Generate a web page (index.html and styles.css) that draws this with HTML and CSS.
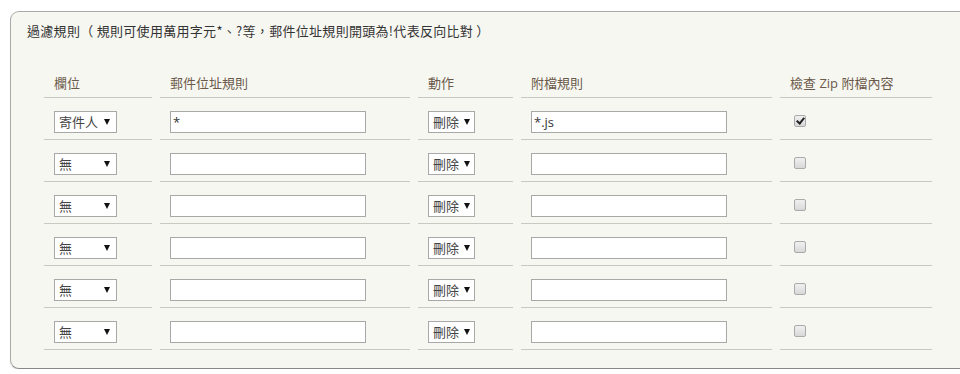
FILE: index.html
```html
<!DOCTYPE html>
<html lang="zh-Hant">
<head>
    <meta charset="UTF-8">
    <meta name="viewport" content="width=device-width, initial-scale=1.0">
    <title>過濾規則</title>
    <link rel="stylesheet" href="styles.css">
</head>
<body>
    <div class="panel">
        <p class="note">過濾規則（ 規則可使用萬用字元*、?等，郵件位址規則開頭為!代表反向比對 ）</p>
        <table class="rules">
            <thead>
                <tr>
                    <th class="c-field">欄位</th>
                    <th class="c-addr">郵件位址規則</th>
                    <th class="c-act">動作</th>
                    <th class="c-att">附檔規則</th>
                    <th class="c-zip">檢查 Zip 附檔內容</th>
                </tr>
            </thead>
            <tbody>
                <tr>
                    <td><span class="sel sel-field"><select><option>寄件人</option></select></span></td>
                    <td><input type="text" class="txt" value="*"></td>
                    <td><span class="sel sel-act"><select><option>刪除</option></select></span></td>
                    <td><input type="text" class="txt" value="*.js"></td>
                    <td><input type="checkbox" class="chk" checked></td>
                </tr>
                <tr>
                    <td><span class="sel sel-field"><select><option>無</option></select></span></td>
                    <td><input type="text" class="txt"></td>
                    <td><span class="sel sel-act"><select><option>刪除</option></select></span></td>
                    <td><input type="text" class="txt"></td>
                    <td><input type="checkbox" class="chk"></td>
                </tr>
                <tr>
                    <td><span class="sel sel-field"><select><option>無</option></select></span></td>
                    <td><input type="text" class="txt"></td>
                    <td><span class="sel sel-act"><select><option>刪除</option></select></span></td>
                    <td><input type="text" class="txt"></td>
                    <td><input type="checkbox" class="chk"></td>
                </tr>
                <tr>
                    <td><span class="sel sel-field"><select><option>無</option></select></span></td>
                    <td><input type="text" class="txt"></td>
                    <td><span class="sel sel-act"><select><option>刪除</option></select></span></td>
                    <td><input type="text" class="txt"></td>
                    <td><input type="checkbox" class="chk"></td>
                </tr>
                <tr>
                    <td><span class="sel sel-field"><select><option>無</option></select></span></td>
                    <td><input type="text" class="txt"></td>
                    <td><span class="sel sel-act"><select><option>刪除</option></select></span></td>
                    <td><input type="text" class="txt"></td>
                    <td><input type="checkbox" class="chk"></td>
                </tr>
                <tr>
                    <td><span class="sel sel-field"><select><option>無</option></select></span></td>
                    <td><input type="text" class="txt"></td>
                    <td><span class="sel sel-act"><select><option>刪除</option></select></span></td>
                    <td><input type="text" class="txt"></td>
                    <td><input type="checkbox" class="chk"></td>
                </tr>
            </tbody>
        </table>
    </div>
</body>
</html>
```

FILE: styles.css
```css
body {
    margin: 0;
    padding: 11px 0 0 10px;
    background: #fff;
    font-family: "Open Sans", "Noto Sans CJK TC", sans-serif;
    font-size: 13px;
    color: #333;
    overflow: hidden;
}
.panel {
    width: 970px;
    padding: 10px 0 18px 0;
    background: #f7f7f2;
    border: 1px solid #aaa;
    border-bottom-color: #888;
    border-radius: 9px;
    box-shadow: 0 1px 1px rgba(0, 0, 0, 0.15);
}
.note {
    margin: 0 0 34px 16px;
    font-family: "Noto Sans CJK TC", sans-serif;
    letter-spacing: 0.3px;
    line-height: 18px;
    color: #333;
}
.rules {
    margin-left: 25px;
    border-collapse: separate;
    border-spacing: 8px 0;
    table-layout: fixed;
}
.rules th {
    text-align: left;
    font-weight: normal;
    color: #6b5a4a;
    line-height: 18px;
    padding: 0 10px 5px;
    border-bottom: 1px solid #c9c9c3;
}
.rules td {
    padding: 13px 10px 6px;
    border-bottom: 1px solid #c9c9c3;
    line-height: 0;
    vertical-align: top;
}
.c-field { width: 88px; }
.c-addr { width: 230px; }
.c-act { width: 75px; }
.c-att { width: 231px; }
.c-zip { width: 132px; }

.sel {
    position: relative;
    display: block;
    height: 22px;
}
.sel select {
    -webkit-appearance: none;
    appearance: none;
    display: block;
    box-sizing: border-box;
    height: 22px;
    padding: 0 0 0 4px;
    border: 1px solid #a8a8a8;
    border-radius: 0;
    background: #fff;
    font-family: inherit;
    font-size: 13px;
    color: #444;
    line-height: 20px;
}
.sel::after {
    content: "";
    position: absolute;
    top: 8px;
    width: 0;
    height: 0;
    border-left: 3px solid transparent;
    border-right: 3px solid transparent;
    border-top: 6px solid #111;
}
.sel-field select { width: 63px; }
.sel-field::after { left: 50px; }
.sel-act select { width: 47px; }
.sel-act::after { left: 36px; }

.txt {
    display: block;
    box-sizing: border-box;
    width: 196px;
    height: 22px;
    padding: 0 2px;
    border: 1px solid #a8a8a8;
    background: #fff;
    font-family: inherit;
    font-size: 13px;
    color: #333;
    outline: none;
}
.chk {
    -webkit-appearance: none;
    appearance: none;
    position: relative;
    display: block;
    box-sizing: border-box;
    width: 12px;
    height: 12px;
    margin: 4px 0 0 4px;
    border: 1px solid #aaa;
    border-radius: 2px;
    background: linear-gradient(#f0f0f0, #d8d8d8);
}
.chk:checked::after {
    content: "";
    position: absolute;
    left: 3px;
    top: 0;
    width: 3px;
    height: 6px;
    border: solid #222;
    border-width: 0 2px 2px 0;
    transform: rotate(40deg);
}
```
